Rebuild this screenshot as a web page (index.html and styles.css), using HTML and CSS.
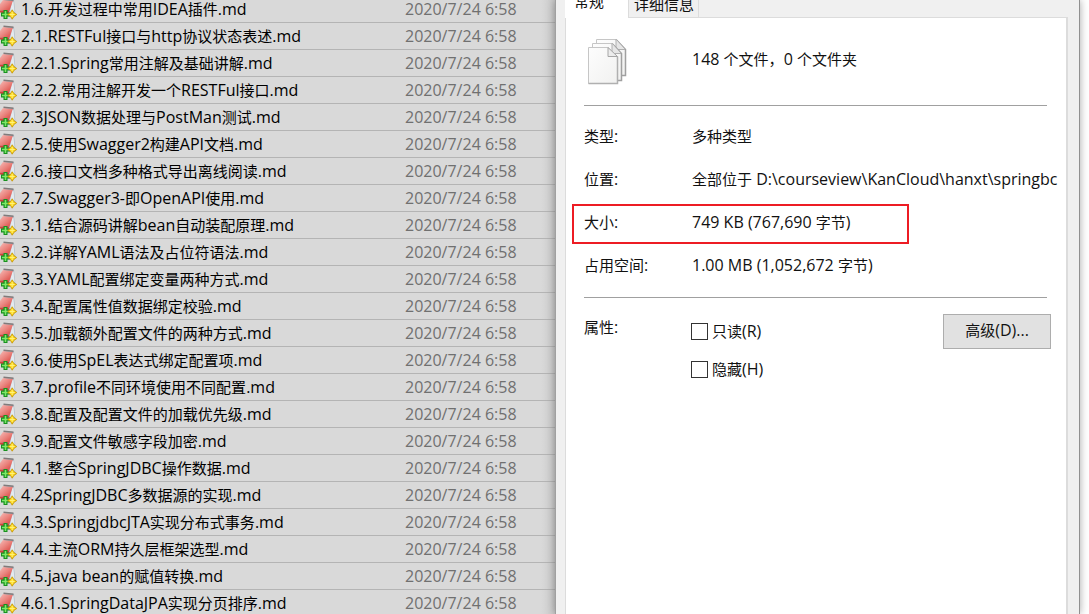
FILE: index.html
```html
<!DOCTYPE html>
<html lang="zh-CN">
<head>
<meta charset="utf-8">
<title>文件属性</title>
<link rel="stylesheet" href="styles.css">
</head>
<body>
<svg class="defs" aria-hidden="true">
  <defs>
    <linearGradient id="red" x1="0" y1="0" x2="1" y2="1">
      <stop offset="0" stop-color="#f6b8b4"/><stop offset=".5" stop-color="#ea827c"/><stop offset="1" stop-color="#d8423c"/>
    </linearGradient>
    <linearGradient id="paper" x1="0" y1="0" x2="1" y2="1">
      <stop offset="0" stop-color="#fdfdfd"/><stop offset="1" stop-color="#f1f1f0"/>
    </linearGradient>
    <symbol id="note" viewBox="0 0 17 22">
      <path d="M4 1 14 2 15.500 16 8 19 1 16Z" fill="#b4c0ca"/>
      <path d="M12 4 13.500 4 14.500 14 10 14Z" fill="#e2eaf0"/>
      <path d="M3 2 12.800 3 9.500 12.500 0 12.500V6Z" fill="url(#red)"/>
      <path d="M0 12.500H9.500L8 16 0 14.500Z" fill="#d0413b"/>
      <path d="M3.500 1.300 13.500 2.300" stroke="#807a7a" stroke-width="1.400"/>
      <path d="M5.500 12v9M1 16.500h9" stroke="#17901f" stroke-width="4"/>
      <path d="M5.500 13v7M2 16.500h7" stroke="#7ce868" stroke-width="1.600"/>
      <path d="M12.200 11.800 14 14.700 16.800 16.500 14 18.300 12.200 21.200 10.400 18.300 7.600 16.500 10.400 14.700Z" fill="#ffd91a" stroke="#c09000" stroke-width=".8"/>
      <path d="M12.200 14v5M9.700 16.500h5" stroke="#fff178"/>
    </symbol>
  </defs>
</svg>
<div class="desktop">
  <main class="files">
    <ul class="list">
      <li class="row"><svg class="note"><use href="#note"/></svg><span class="name">1.6.<b>开发过程中常用</b>IDEA<b>插件</b>.md</span><time class="date">2020/7/24 6:58</time></li>
      <li class="row"><svg class="note"><use href="#note"/></svg><span class="name">2.1.RESTFul<b>接口与</b>http<b>协议状态表述</b>.md</span><time class="date">2020/7/24 6:58</time></li>
      <li class="row"><svg class="note"><use href="#note"/></svg><span class="name">2.2.1.Spring<b>常用注解及基础讲解</b>.md</span><time class="date">2020/7/24 6:58</time></li>
      <li class="row"><svg class="note"><use href="#note"/></svg><span class="name">2.2.2.<b>常用注解开发一个</b>RESTFul<b>接口</b>.md</span><time class="date">2020/7/24 6:58</time></li>
      <li class="row"><svg class="note"><use href="#note"/></svg><span class="name">2.3JSON<b>数据处理与</b>PostMan<b>测试</b>.md</span><time class="date">2020/7/24 6:58</time></li>
      <li class="row"><svg class="note"><use href="#note"/></svg><span class="name">2.5.<b>使用</b>Swagger2<b>构建</b>API<b>文档</b>.md</span><time class="date">2020/7/24 6:58</time></li>
      <li class="row"><svg class="note"><use href="#note"/></svg><span class="name">2.6.<b>接口文档多种格式导出离线阅读</b>.md</span><time class="date">2020/7/24 6:58</time></li>
      <li class="row"><svg class="note"><use href="#note"/></svg><span class="name">2.7.Swagger3-<b>即</b>OpenAPI<b>使用</b>.md</span><time class="date">2020/7/24 6:58</time></li>
      <li class="row"><svg class="note"><use href="#note"/></svg><span class="name">3.1.<b>结合源码讲解</b>bean<b>自动装配原理</b>.md</span><time class="date">2020/7/24 6:58</time></li>
      <li class="row"><svg class="note"><use href="#note"/></svg><span class="name">3.2.<b>详解</b>YAML<b>语法及占位符语法</b>.md</span><time class="date">2020/7/24 6:58</time></li>
      <li class="row"><svg class="note"><use href="#note"/></svg><span class="name">3.3.YAML<b>配置绑定变量两种方式</b>.md</span><time class="date">2020/7/24 6:58</time></li>
      <li class="row"><svg class="note"><use href="#note"/></svg><span class="name">3.4.<b>配置属性值数据绑定校验</b>.md</span><time class="date">2020/7/24 6:58</time></li>
      <li class="row"><svg class="note"><use href="#note"/></svg><span class="name">3.5.<b>加载额外配置文件的两种方式</b>.md</span><time class="date">2020/7/24 6:58</time></li>
      <li class="row"><svg class="note"><use href="#note"/></svg><span class="name">3.6.<b>使用</b>SpEL<b>表达式绑定配置项</b>.md</span><time class="date">2020/7/24 6:58</time></li>
      <li class="row"><svg class="note"><use href="#note"/></svg><span class="name">3.7.profile<b>不同环境使用不同配置</b>.md</span><time class="date">2020/7/24 6:58</time></li>
      <li class="row"><svg class="note"><use href="#note"/></svg><span class="name">3.8.<b>配置及配置文件的加载优先级</b>.md</span><time class="date">2020/7/24 6:58</time></li>
      <li class="row"><svg class="note"><use href="#note"/></svg><span class="name">3.9.<b>配置文件敏感字段加密</b>.md</span><time class="date">2020/7/24 6:58</time></li>
      <li class="row"><svg class="note"><use href="#note"/></svg><span class="name">4.1.<b>整合</b>SpringJDBC<b>操作数据</b>.md</span><time class="date">2020/7/24 6:58</time></li>
      <li class="row"><svg class="note"><use href="#note"/></svg><span class="name">4.2SpringJDBC<b>多数据源的实现</b>.md</span><time class="date">2020/7/24 6:58</time></li>
      <li class="row"><svg class="note"><use href="#note"/></svg><span class="name">4.3.SpringjdbcJTA<b>实现分布式事务</b>.md</span><time class="date">2020/7/24 6:58</time></li>
      <li class="row"><svg class="note"><use href="#note"/></svg><span class="name">4.4.<b>主流</b>ORM<b>持久层框架选型</b>.md</span><time class="date">2020/7/24 6:58</time></li>
      <li class="row"><svg class="note"><use href="#note"/></svg><span class="name">4.5.java bean<b>的赋值转换</b>.md</span><time class="date">2020/7/24 6:58</time></li>
      <li class="row"><svg class="note"><use href="#note"/></svg><span class="name">4.6.1.SpringDataJPA<b>实现分页排序</b>.md</span><time class="date">2020/7/24 6:58</time></li>
    </ul>
  </main>
  <section class="dialog" aria-label="属性">
    <div class="tabs" role="tablist">
      <button class="tab tab-active" role="tab" aria-selected="true"><b>常规</b></button>
      <button class="tab" role="tab" aria-selected="false"><b>详细信息</b></button>
    </div>
    <div class="panel" role="tabpanel">
      <div class="summary">
        <svg class="pages" viewBox="0 0 42 50" fill="url(#paper)" stroke="#c6c6c6">
          <path d="M9.500 2.500H29L38.500 12.500V38.500H9.500Z"/>
          <path d="M29 2.500 38.500 12.500V38.500H34" fill="none" stroke="#a0a0a0" stroke-width="1.500"/>
          <path d="M29 2.500V12.500H38" fill="#e6e6e6" stroke="#b0b0b0"/>
          <path d="M5.500 6.500H25L34.500 16.500V43.500H5.500Z"/>
          <path d="M25 6.500 34.500 16.500V43.500H30" fill="none" stroke="#a0a0a0" stroke-width="1.500"/>
          <path d="M25 6.500V16.500H34" fill="#e6e6e6" stroke="#b0b0b0"/>
          <path d="M1.500 10.500H21L30.500 19.500V46.500H1.500Z"/>
          <path d="M30.500 19.500V46.500H1.500" fill="none" stroke="#b0b0b0" stroke-width="1.500"/>
          <path d="M21 10.500V19.500H30.500Z" fill="#ececec" stroke="#a6a6a6"/>
        </svg>
        <span class="count">148 <b>个文件，</b>0 <b>个文件夹</b></span>
      </div>
      <hr class="rule">
      <dl class="facts">
        <div class="fact"><dt><b>类型</b>:</dt><dd><b>多种类型</b></dd></div>
        <div class="fact"><dt><b>位置</b>:</dt><dd><b>全部位于</b> D:\courseview\KanCloud\hanxt\springbc</dd></div>
        <div class="fact marked"><dt><b>大小</b>:</dt><dd>749 KB (767,690 <b>字节</b>)</dd></div>
        <div class="fact"><dt><b>占用空间</b>:</dt><dd>1.00 MB (1,052,672 <b>字节</b>)</dd></div>
      </dl>
      <hr class="rule">
      <div class="attributes">
        <span class="caption"><b>属性</b>:</span>
        <div class="checks">
          <label class="check"><input type="checkbox"><span><b>只读</b>(R)</span></label>
          <label class="check"><input type="checkbox"><span><b>隐藏</b>(H)</span></label>
        </div>
        <button class="advanced"><b>高级</b>(D)...</button>
      </div>
    </div>
  </section>
</div>
</body>
</html>
```
FILE: styles.css
```css
* { box-sizing: border-box; }

body {
  margin: 0;
  background: #fff;
  color: #111;
  font: 16px/26px "Open Sans", "Noto Sans CJK SC", sans-serif;
}

button { color: inherit; font: inherit; }

/* Han characters run slightly smaller than the Latin text. */
b { font-size: 15px; font-weight: 400; }

.defs { position: absolute; width: 0; height: 0; }

.desktop {
  display: flex;
  height: 100vh;
  overflow: hidden;
  padding-right: 9px;
}

.files {
  flex: 1;
  min-width: 0;
  background: linear-gradient(to left, #cacaca, #d9d9d9 14px);
}

.list { list-style: none; margin: -4px 0 0; padding: 0; }

.row {
  display: flex;
  align-items: center;
  height: 27px;
  border-bottom: 1px solid #b4b4b4;
  white-space: nowrap;
}

.note { flex: none; width: 17px; height: 22px; margin-right: 4px; }
.name { flex: 1; color: #000; }
.date { flex: none; width: 150px; color: #707070; }

.dialog {
  flex: none;
  display: flex;
  flex-direction: column;
  width: 525px;
  padding: 0 11px 0 9px;
  background: #f0f0f0;
  border-left: 1px solid #a0a0a0;
  border-right: 1px solid #909090;
  box-shadow: 0 0 8px rgb(0 0 0 / 35%);
}

.tabs { display: flex; height: 17px; }

.tab {
  display: flex;
  align-items: flex-end;
  height: 18px;
  padding: 0 4px 3px 5px;
  border: 1px solid #dcdcdc;
  border-top: 0;
  background: #f0f0f0;
  line-height: 20px;
}

.tab-active {
  position: relative;
  padding: 0 24px 7px 9px;
  border: 0;
  background: #fff;
}

.panel {
  flex: 1;
  padding: 0 15px 0 18px;
  background: #fff;
  border: solid #dcdcdc;
  border-width: 1px 2px 0 1px;
}

.summary { display: flex; align-items: center; height: 87px; }
.pages { width: 42px; height: 50px; margin: 0 63px 0 3px; }
.count { padding-bottom: 5px; }

.rule {
  height: 1px;
  margin: 0 4px 0 0;
  border: 0;
  background: #a0a0a0;
}

.facts { margin: 0; padding: 8px 0 11px; }

.fact {
  position: relative;
  display: grid;
  grid-template-columns: 108px 1fr;
  align-items: center;
  height: 43px;
}

.fact dd { margin: 0; white-space: nowrap; }

.marked::after {
  content: "";
  position: absolute;
  inset: 4px 142px -1px -12px;
  border: 2px solid #ed1c24;
}

.attributes {
  display: grid;
  grid-template-columns: 107px 1fr 108px;
  align-items: start;
  padding-top: 16px;
}

.checks { display: grid; gap: 12px; padding-top: 4px; }
.check { display: flex; align-items: center; gap: 4px; }

.check input {
  appearance: none;
  width: 17px;
  height: 17px;
  margin: 0;
  border: 1px solid #333;
  background: #fff;
}

.advanced {
  height: 35px;
  padding: 0 0 3px;
  border: 1px solid #adadad;
  background: #e1e1e1;
}
```
